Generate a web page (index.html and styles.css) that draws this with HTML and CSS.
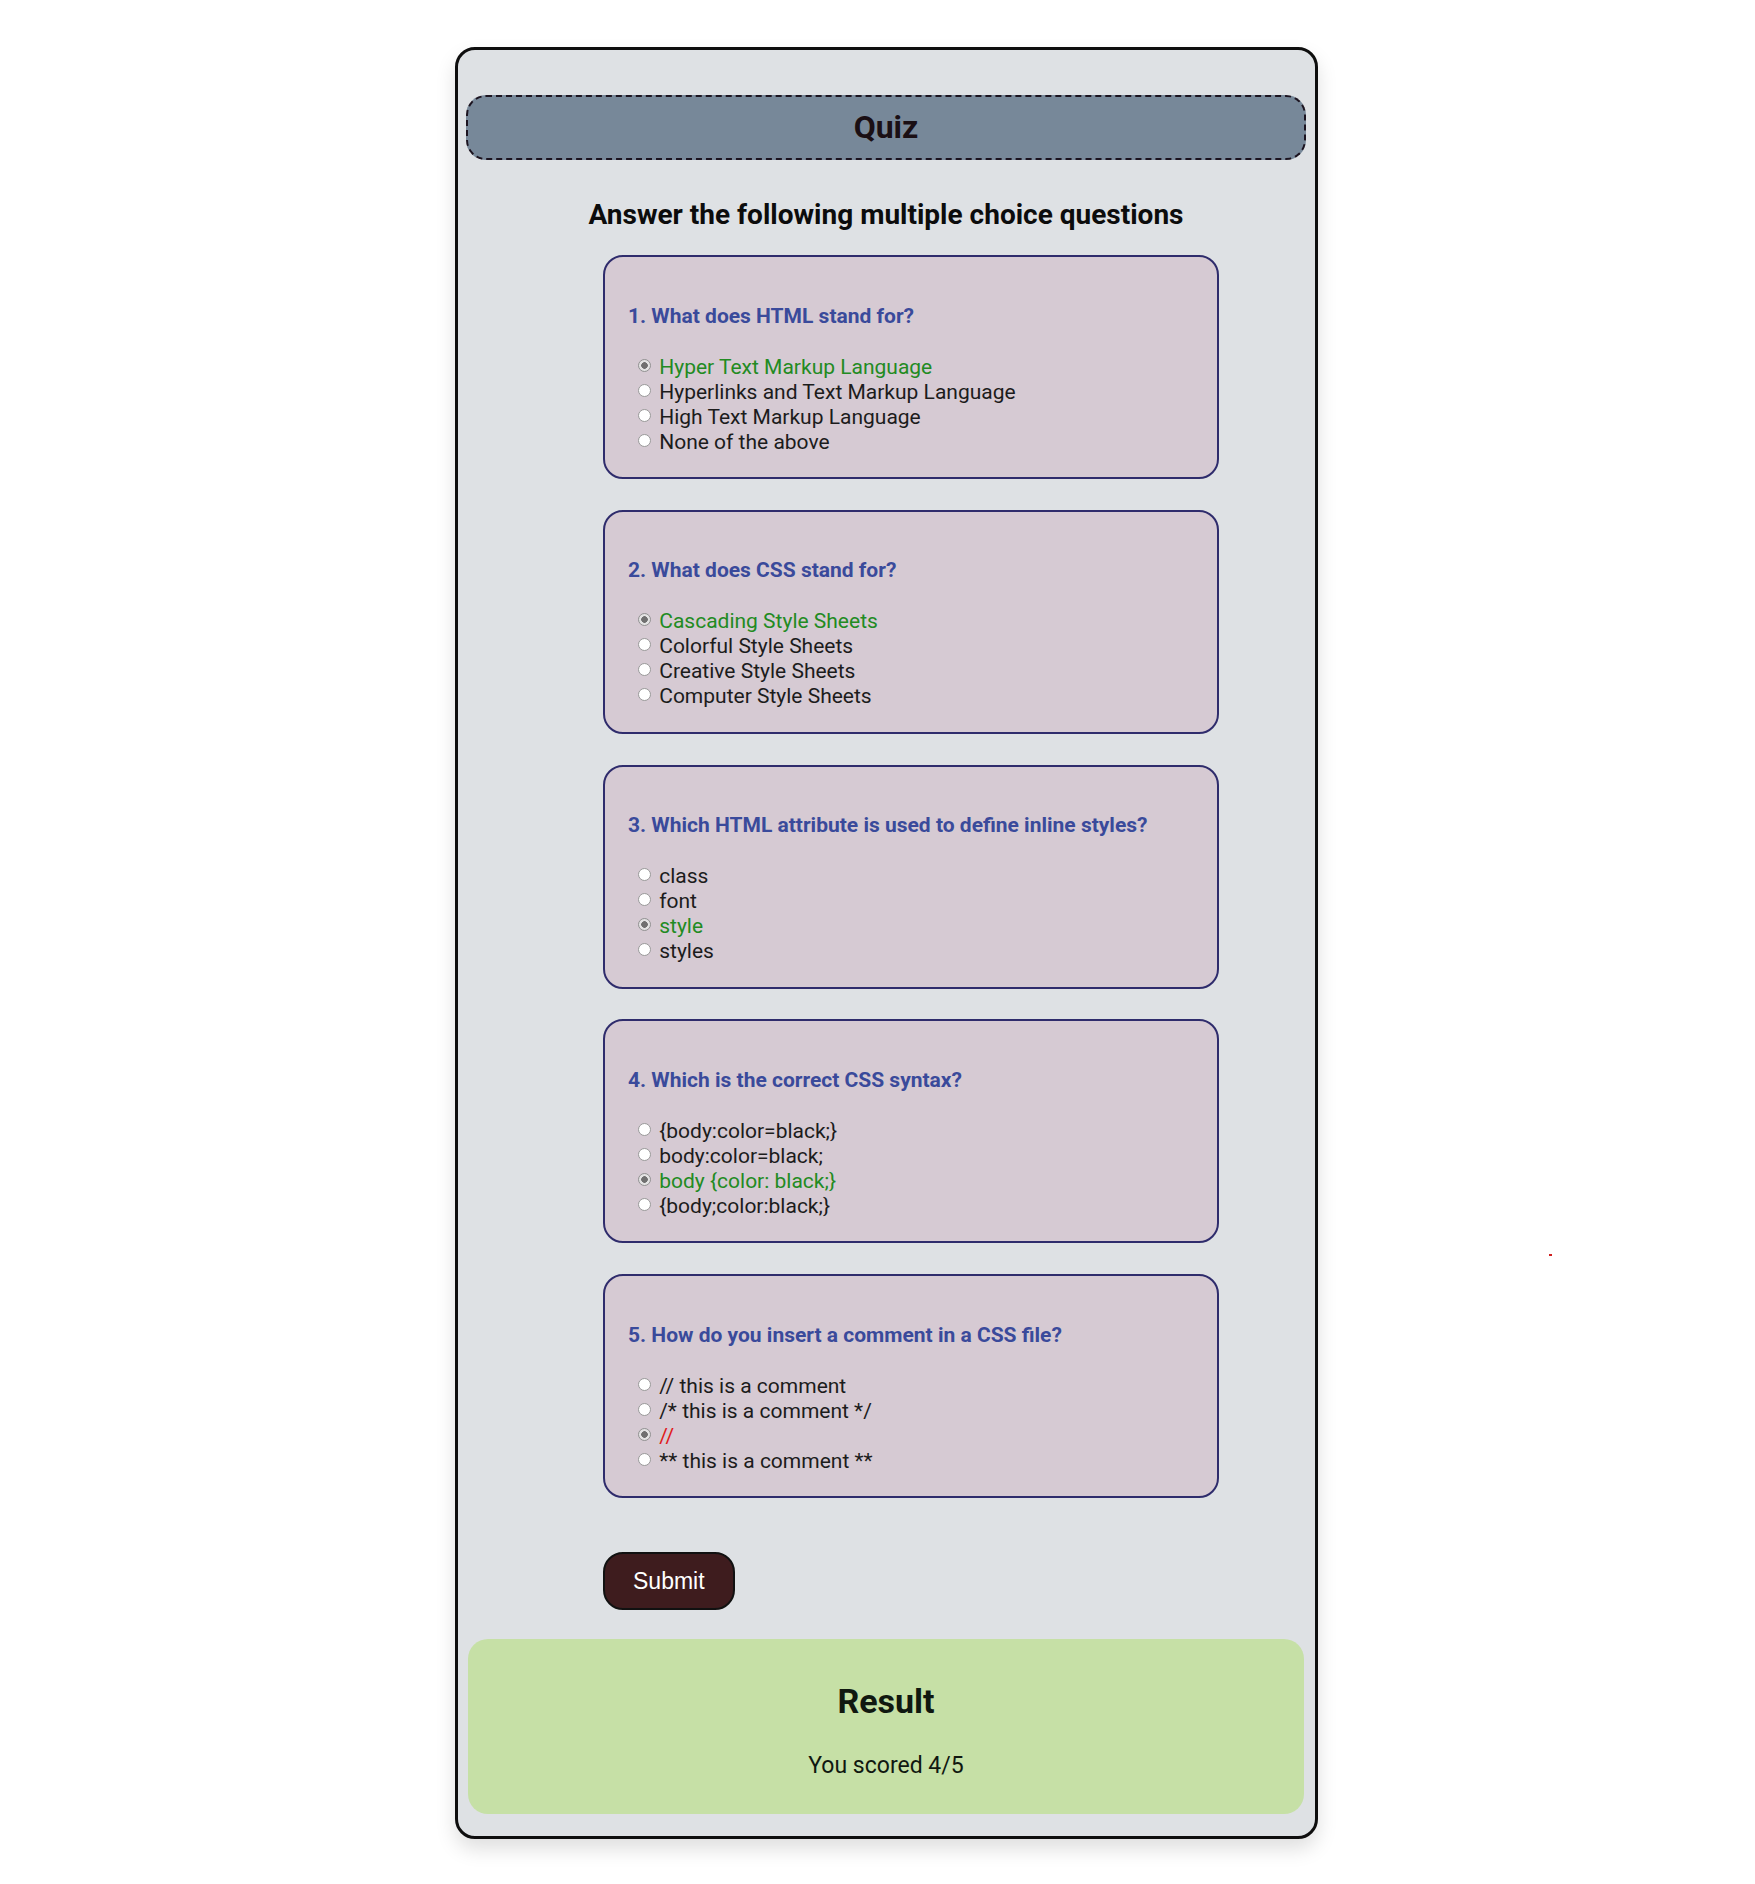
FILE: index.html
```html
<!DOCTYPE html>
<html lang="en">
<head>
<meta charset="utf-8">
<title>Quiz</title>
<link rel="stylesheet" href="styles.css">
</head>
<body>
<main class="quiz">
  <header class="quiz-header"><h1>Quiz</h1></header>
  <h2 class="intro">Answer the following multiple choice questions</h2>
  <form class="quiz-form">
    <section class="question">
      <h3>1. What does HTML stand for?</h3>
      <div class="options">
        <label class="option correct"><input type="radio" name="q1" checked> Hyper Text Markup Language</label>
        <label class="option"><input type="radio" name="q1"> Hyperlinks and Text Markup Language</label>
        <label class="option"><input type="radio" name="q1"> High Text Markup Language</label>
        <label class="option"><input type="radio" name="q1"> None of the above</label>
      </div>
    </section>
    <section class="question">
      <h3>2. What does CSS stand for?</h3>
      <div class="options">
        <label class="option correct"><input type="radio" name="q2" checked> Cascading Style Sheets</label>
        <label class="option"><input type="radio" name="q2"> Colorful Style Sheets</label>
        <label class="option"><input type="radio" name="q2"> Creative Style Sheets</label>
        <label class="option"><input type="radio" name="q2"> Computer Style Sheets</label>
      </div>
    </section>
    <section class="question">
      <h3>3. Which HTML attribute is used to define inline styles?</h3>
      <div class="options">
        <label class="option"><input type="radio" name="q3"> class</label>
        <label class="option"><input type="radio" name="q3"> font</label>
        <label class="option correct"><input type="radio" name="q3" checked> style</label>
        <label class="option"><input type="radio" name="q3"> styles</label>
      </div>
    </section>
    <section class="question">
      <h3>4. Which is the correct CSS syntax?</h3>
      <div class="options">
        <label class="option"><input type="radio" name="q4"> {body:color=black;}</label>
        <label class="option"><input type="radio" name="q4"> body:color=black;</label>
        <label class="option correct"><input type="radio" name="q4" checked> body {color: black;}</label>
        <label class="option"><input type="radio" name="q4"> {body;color:black;}</label>
      </div>
    </section>
    <section class="question">
      <h3>5. How do you insert a comment in a CSS file?</h3>
      <div class="options">
        <label class="option"><input type="radio" name="q5"> // this is a comment</label>
        <label class="option"><input type="radio" name="q5"> /* this is a comment */</label>
        <label class="option wrong"><input type="radio" name="q5" checked> //</label>
        <label class="option"><input type="radio" name="q5"> ** this is a comment **</label>
      </div>
    </section>
    <button type="button" class="submit">Submit</button>
  </form>
  <section class="result">
    <h2>Result</h2>
    <p>You scored 4/5</p>
  </section>
</main>
<div class="stray-dot"></div>
</body>
</html>
```
FILE: styles.css
```css
* {
  box-sizing: border-box;
}

html, body {
  margin: 0;
  background: #ffffff;
}

body {
  position: relative;
  display: flex;
  justify-content: center;
  padding: 47px 0 46px 18px;
  font-family: Roboto, "Liberation Sans", Arial, sans-serif;
  color: #1c1c1c;
}

.quiz {
  width: 863px;
  background: #dee1e4;
  border: 3px solid #0e0e0e;
  border-radius: 20px;
  padding: 45px 9px 22px 8px;
  box-shadow: 0 10px 20px rgba(0, 0, 0, 0.13);
}

.quiz-header {
  height: 65px;
  background: #778899;
  border: 2px dashed #1c1420;
  border-radius: 20px;
}

.quiz-header h1 {
  margin: 0;
  font-size: 32px;
  line-height: 61px;
  font-weight: 700;
  text-align: center;
  color: #1a0f14;
}

.intro {
  margin: 38px 0 24.2px;
  font-size: 28px;
  font-weight: 700;
  text-align: center;
  color: #0c0c0c;
}

.quiz-form {
  width: 616px;
  padding-left: 50px;
  margin: 0 auto;
  box-sizing: content-box;
}

.question {
  height: 224px;
  margin-bottom: 30.75px;
  padding: 46.5px 21px 0 23px;
  background: #d6cad3;
  border: 2px solid #2f2c6c;
  border-radius: 20px;
}

.question:last-of-type {
  margin-bottom: 54px;
}

.question h3 {
  margin: 0 0 27px;
  font-size: 21px;
  font-weight: 700;
  color: #3a4a9b;
}

.options {
  padding-left: 5px;
}

.option {
  display: block;
  font-size: 21px;
  line-height: 25px;
  color: #1c1c1c;
}

.option input {
  appearance: none;
  -webkit-appearance: none;
  width: 13px;
  height: 13px;
  margin: 3px 3px 0 5px;
  vertical-align: 2px;
  border: 1px solid #999999;
  border-radius: 50%;
  background: #ffffff;
}

.option input:checked {
  border-color: #929292;
  background: radial-gradient(circle, #707070 0 3px, #e3e3e3 3.6px);
}

.option.correct {
  color: #228b22;
}

.option.wrong {
  color: #e01b1b;
}

.submit {
  display: block;
  margin: 0 0 29px;
  padding: 14px 28px 14px;
  font-family: "Liberation Sans", Arial, sans-serif;
  font-size: 23px;
  line-height: 26px;
  color: #ffffff;
  background: #3e1c1e;
  border: 2px solid #111111;
  border-radius: 20px;
}

.result {
  margin: 0 2px;
  padding: 41.5px 0 35px;
  background: #c6e0a6;
  border-radius: 20px;
  text-align: center;
  color: #101810;
}

.result h2 {
  margin: 0 0 31.4px;
  font-size: 34px;
  font-weight: 700;
}

.result p {
  margin: 0;
  font-size: 23px;
}

.stray-dot {
  position: absolute;
  top: 1254px;
  left: 1549px;
  width: 3px;
  height: 2px;
  background: #d02020;
}
```
